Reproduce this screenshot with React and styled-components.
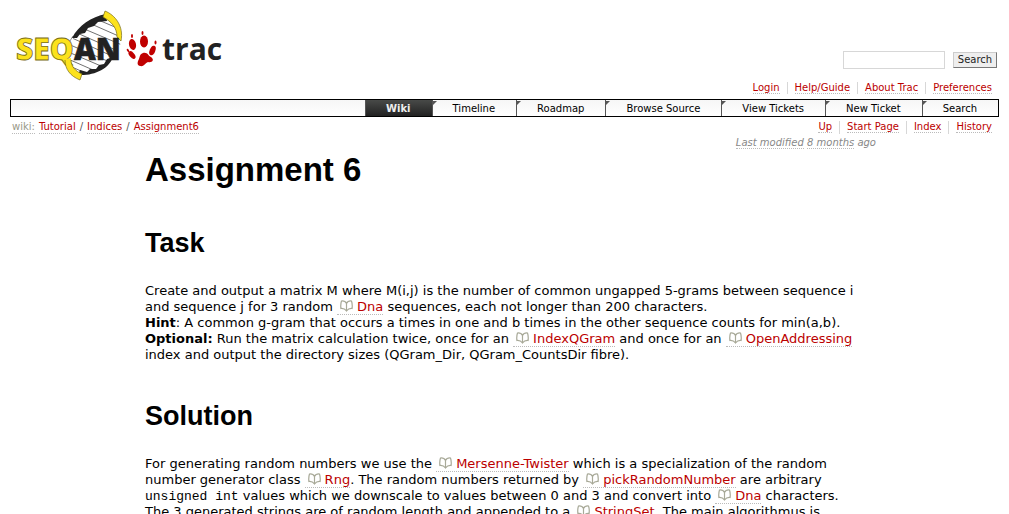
import React from "react";
import styled, { createGlobalStyle, css } from "styled-components";

const Global = createGlobalStyle`
  * { box-sizing: border-box; }
  body {
    margin: 0;
    background: #fff;
    color: #000;
    font: 13px/16px "DejaVu Sans", Verdana, sans-serif;
  }
`;

const Page = styled.div`
  height: 100vh;
  overflow: hidden;
  padding: 0 10px;
`;

const Header = styled.header`
  display: flex;
  justify-content: space-between;
  align-items: flex-end;
  height: 99px;
`;

const LogoLink = styled.a`
  align-self: flex-start;
  display: block;
  line-height: 0;
`;

const HeaderTools = styled.div`
  display: flex;
  flex-direction: column;
  align-items: flex-end;
  gap: 13px;
  padding-bottom: 5px;
`;

const SearchForm = styled.form`
  display: flex;
  align-items: center;
  gap: 8px;
  margin: 0;
  padding-right: 2px;
`;

const SearchInput = styled.input`
  width: 102px;
  height: 18px;
  padding: 0 4px;
  border: 1px solid #d7d7d7;
  border-radius: 0;
  background: #fff;
  font: 10px "DejaVu Sans", Verdana, sans-serif;
`;

const SearchButton = styled.button`
  width: 44px;
  height: 16px;
  padding: 0;
  border: 1px solid #ccc;
  border-right-color: #777;
  border-bottom-color: #777;
  border-radius: 0;
  background: #eee;
  color: #222;
  font: 10px/12px "DejaVu Sans", Verdana, sans-serif;
`;

const LinkList = styled.ul`
  display: flex;
  margin: 0;
  padding: 0;
  list-style: none;
  font-size: 10px;
  line-height: 12px;
`;

const LinkItem = styled.li`
  padding: 0 7px;
  & + & { border-left: 1px solid #d7d7d7; }
`;

const Link = styled.a`
  color: #b00;
  text-decoration: none;
  border-bottom: 1px dotted #bbb;
  ${(p) => p.$muted && css`color: #998;`}
`;

const MainNav = styled.nav`
  display: flex;
  justify-content: flex-end;
  height: 18px;
  border: 1px solid #000;
  background: linear-gradient(#f6f6f6, #fff);
  font-size: 10px;
  line-height: 16px;
`;

const Tab = styled.a`
  position: relative;
  padding: 1px 21px 0 20px;
  border-left: 1px solid #555;
  color: #000;
  text-decoration: none;
  ${(p) =>
    p.$active
      ? css`
          background: linear-gradient(#484a48, #222);
          color: #eee;
          font-weight: bold;
        `
      : css`
          &::before {
            content: "";
            position: absolute;
            top: 1px;
            left: 0;
            border-top: 4px solid #555;
            border-right: 4px solid transparent;
          }
        `}
`;

const ContextBar = styled.div`
  display: flex;
  justify-content: space-between;
  padding: 4px 0 2px 2px;
  font-size: 10px;
  line-height: 12px;
  color: #555;
`;

const Crumbs = styled.div`
  display: flex;
  gap: 4px;
`;

const Content = styled.main`
  padding: 0 123px 0 135px;
`;

const Modified = styled.div`
  color: #888;
  font-size: 10px;
  font-style: italic;
  line-height: 14px;
  text-align: right;
  a { color: inherit; }
`;

const Title = styled.h1`
  margin: 1px 0 38px;
  font: bold 33px/38px "Liberation Sans", Arial, sans-serif;
`;

const Heading = styled.h2`
  margin: 0 0 24px;
  font: bold 27px/32px "Liberation Sans", Arial, sans-serif;
`;

const Paragraph = styled.p`
  margin: 0 0 37px;
  white-space: nowrap;
`;

const Code = styled.code`
  font: 13px/12px "Liberation Mono", monospace;
`;

const DocLink = styled(Link)`
  padding-left: 3px;
`;

const BookIcon = styled.svg`
  width: 13px;
  height: 12px;
  margin-right: 4px;
  vertical-align: -1px;
`;

function Doc({ children }) {
  return (
    <DocLink href="#doc">
      <BookIcon viewBox="0 0 13 12" fill="none" stroke="#a8a998" strokeWidth="1.2" aria-hidden="true">
        <path d="M6.500 11V3.500C5.500 1.500 3.500 .8 1.500 1C.8 3 .6 6 .9 8.500C3 8.300 5 9 6.500 11C8 9 10 8.300 12.100 8.500C12.400 6 12.200 3 11.500 1C9.500 .8 7.500 1.500 6.500 3.500" />
      </BookIcon>
      {children}
    </DocLink>
  );
}

function Logo() {
  return (
    <svg width="220" height="84" viewBox="10 0 220 84" role="img" aria-label="SeqAn trac">
      <defs>
        <clipPath id="strand">
          <path d="M104 17C88 20 69 36 66 56C67 68 73 73 82 75C98 74 119 60 121 40C119 29 113 21 104 17Z" />
        </clipPath>
      </defs>
      <g clipPath="url(#strand)" stroke="#333" strokeWidth="0.7">
        <path d="M96 19L122 30M89 23L123 38M82 28L122 45M77 33L118 51M72 38L112 56M68 44L112 63M66 51L108 69M68 59L100 73M72 67L92 76" />
      </g>
      <path d="M73 36Q65 47 66 60M118 38Q118 49 110 59" fill="none" stroke="#777" strokeWidth="0.8" />
      <path d="M106 14C91 17 79 25 72 38L77 38L80 34L85 33L88 28L94 26L98 22L107 21Z" fill="#222" />
      <path d="M78 75C94 76 109 69 113 57L107 59L104 64L99 65L96 69L90 69L87 72L80 70Z" fill="#222" />
      <path d="M105 11C115 15 124 26 121 41L117 37C117 28 112 22 103 17Z" fill="#fce21c" stroke="#776b16" strokeWidth="0.7" />
      <g fontFamily="'Open Sans', sans-serif" fontWeight="800" fontSize="30">
        <text x="16" y="60" fill="#fce21c" stroke="#776b16" strokeWidth="0.8">SEQ</text>
        <text x="74" y="60" fill="#222" stroke="#222" strokeWidth="0.6">AN</text>
        <text x="162" y="60" fill="#222" fontWeight="700">trac</text>
      </g>
      <path d="M65 59L71 58C71 66 75 71 82 74L80 80C70 76 65 69 65 59Z" fill="#fce21c" />
      <path d="M65 60C65 69 70 76 80 80L82 74C75 71 71 66 71 60" fill="none" stroke="#776b16" strokeWidth="0.7" />
      <g fill="#c00000">
        <ellipse cx="132.500" cy="44.500" rx="3.500" ry="5.500" transform="rotate(-12 132.500 44.500)" />
        <ellipse cx="144" cy="41.500" rx="4" ry="6" />
        <ellipse cx="132" cy="55" rx="2.500" ry="4.500" transform="rotate(-40 132 55)" />
        <ellipse cx="152.500" cy="50.500" rx="2.800" ry="5" transform="rotate(22 152.500 50.500)" />
        <ellipse cx="132" cy="36" rx="1" ry="2" />
        <ellipse cx="142.500" cy="33" rx="1" ry="2" />
        <ellipse cx="155.500" cy="42.500" rx="1" ry="2" />
        <ellipse cx="128" cy="50.500" rx="1" ry="1.800" transform="rotate(-35 128 50.500)" />
        <path d="M143 53C148 52 148 56 151 57C155 60 152 63 148 62C145 63 144 67 140 66C136 65 138 61 139 59C140 56 140 54 143 53Z" />
      </g>
    </svg>
  );
}

const metaLinks = ["Login", "Help/Guide", "About Trac", "Preferences"];
const tabs = ["Wiki", "Timeline", "Roadmap", "Browse Source", "View Tickets", "New Ticket", "Search"];
const contextLinks = ["Up", "Start Page", "Index", "History"];

function Links({ items }) {
  return (
    <LinkList>
      {items.map((t) => (
        <LinkItem key={t}><Link href="#">{t}</Link></LinkItem>
      ))}
    </LinkList>
  );
}

export default function App() {
  return (
    <>
      <Global />
      <Page>
        <Header>
          <LogoLink href="#home"><Logo /></LogoLink>
          <HeaderTools>
            <SearchForm role="search">
              <SearchInput type="text" aria-label="Search" />
              <SearchButton type="button">Search</SearchButton>
            </SearchForm>
            <Links items={metaLinks} />
          </HeaderTools>
        </Header>
        <MainNav>
          {tabs.map((t, i) => (
            <Tab key={t} href="#" $active={i === 0}>{t}</Tab>
          ))}
        </MainNav>
        <ContextBar>
          <Crumbs>
            <Link href="#" $muted>wiki:</Link>
            <Link href="#">Tutorial</Link>
            <span>/</span>
            <Link href="#">Indices</Link>
            <span>/</span>
            <Link href="#">Assignment6</Link>
          </Crumbs>
          <Links items={contextLinks} />
        </ContextBar>
        <Content>
          <Modified>
            <Link href="#">Last modified</Link> <Link href="#">8 months</Link> ago
          </Modified>
          <Title>Assignment 6</Title>
          <Heading>Task</Heading>
          <Paragraph>
            Create and output a matrix M where M(i,j) is the number of common ungapped 5-grams between sequence i<br />
            and sequence j for 3 random <Doc>Dna</Doc> sequences, each not longer than 200 characters.<br />
            <b>Hint</b>: A common g-gram that occurs a times in one and b times in the other sequence counts for min(a,b).<br />
            <b>Optional:</b> Run the matrix calculation twice, once for an <Doc>IndexQGram</Doc> and once for an <Doc>OpenAddressing</Doc><br />
            index and output the directory sizes (QGram_Dir, QGram_CountsDir fibre).
          </Paragraph>
          <Heading>Solution</Heading>
          <Paragraph>
            For generating random numbers we use the <Doc>Mersenne-Twister</Doc> which is a specialization of the random<br />
            number generator class <Doc>Rng</Doc>. The random numbers returned by <Doc>pickRandomNumber</Doc> are arbitrary<br />
            <Code>unsigned int</Code> values which we downscale to values between 0 and 3 and convert into <Doc>Dna</Doc> characters.<br />
            The 3 generated strings are of random length and appended to a <Doc>StringSet</Doc>. The main algorithmus is
          </Paragraph>
        </Content>
      </Page>
    </>
  );
}
